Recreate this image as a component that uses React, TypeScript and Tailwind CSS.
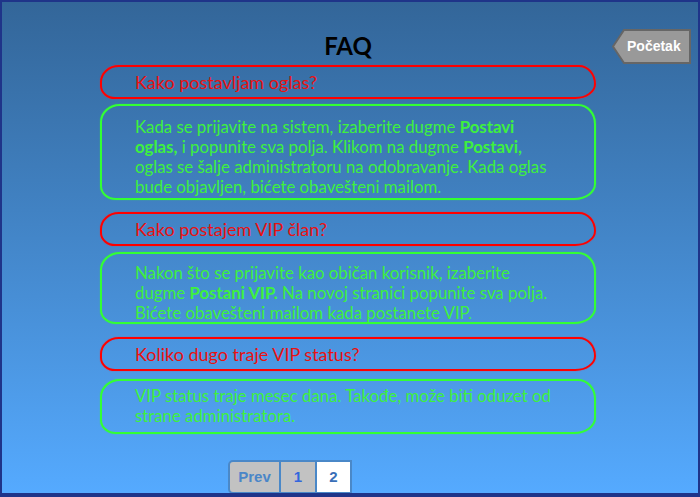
import type { ReactNode } from "react";

const sketchy =
  "rounded-[20px_18px_22px_16px/18px_20px_16px_14px]";

function Question({ children, className }: { children: ReactNode; className: string }) {
  return (
    <div
      className={`${sketchy} ${className} h-[34px] border-2 border-[#ff0000] pl-[33px] text-[18px] leading-[30px] text-[#e81212] shadow-[0_0_1px_#ff3030]`}
    >
      {children}
    </div>
  );
}

function Answer({ children, className }: { children: ReactNode; className: string }) {
  return (
    <div
      className={`${sketchy} ${className} border-2 border-[#33ff33] pr-[34px] pl-[33px] text-[16.8px] leading-[20px] text-[#3ef03e] shadow-[0_0_1px_#33ff33]`}
    >
      {children}
    </div>
  );
}

export default function App() {
  return (
    <div className="relative h-[497px] w-[700px] overflow-hidden border-2 border-b-4 border-[#1f3489] bg-linear-to-b from-[#336699] to-[#55aaff] font-['Lato','Liberation_Sans',sans-serif]">
      {/* back to start */}
      <a className="absolute top-[27px] left-[610px] flex h-[35px] w-[79px] items-center pl-[15px]">
        <svg className="absolute inset-0" width="79" height="35" viewBox="0 0 79 35">
          <polygon points="12,1 78,1 78,34 12,34 1,17.5" fill="#999999" stroke="#666666" strokeWidth="2" />
        </svg>
        <span className="relative font-['Liberation_Sans',Arial,sans-serif] text-[14px] font-bold text-white">
          Početak
        </span>
      </a>

      <div className="ml-[98px] flex w-[496px] flex-col">
        <h1 className="mt-[29px] text-center text-[24px] leading-[29px] font-bold text-black">FAQ</h1>

        <Question className="mt-[5px]">Kako postavljam oglas?</Question>
        <Answer className="mt-[5px] h-[96px] pt-[11px]">
          Kada se prijavite na sistem, izaberite dugme <b>Postavi oglas,</b> i popunite sva polja.
          Klikom na dugme <b>Postavi,</b> oglas se šalje administratoru na odobravanje. Kada oglas
          bude objavljen, bićete obavešteni mailom.
        </Answer>

        <Question className="mt-[12px] h-[33px]">Kako postajem VIP član?</Question>
        <Answer className="mt-[6px] h-[72px] pt-[9px]">
          Nakon što se prijavite kao običan korisnik, izaberite dugme <b>Postani VIP.</b> Na novoj
          stranici popunite sva polja. Bićete obavešteni mailom kada postanete VIP.
        </Answer>

        <Question className="mt-[13px] h-[33px]">Koliko dugo traje VIP status?</Question>
        <Answer className="mt-[8px] h-[55px] pt-[5px]">
          VIP status traje mesec dana. Takođe, može biti oduzet od strane administratora.
        </Answer>
      </div>

      {/* pagination */}
      <div className="mt-[26px] ml-[226px] flex h-[34px] w-fit font-['Liberation_Sans',Arial,sans-serif] text-[15px] font-bold">
        <span className="flex w-[53px] items-center justify-center rounded-l-[5px] border-2 border-[#4a88c8] bg-[#c2c2c2] text-[#4a86c8]">
          Prev
        </span>
        <span className="flex w-[36px] items-center justify-center border-y-2 border-r-2 border-[#4a88c8] bg-[#c2c2c2] text-[#3366dd]">
          1
        </span>
        <span className="flex w-[35px] items-center justify-center border-y-2 border-r-2 border-[#4a88c8] bg-white text-[#3a6fb8]">
          2
        </span>
      </div>
    </div>
  );
}
